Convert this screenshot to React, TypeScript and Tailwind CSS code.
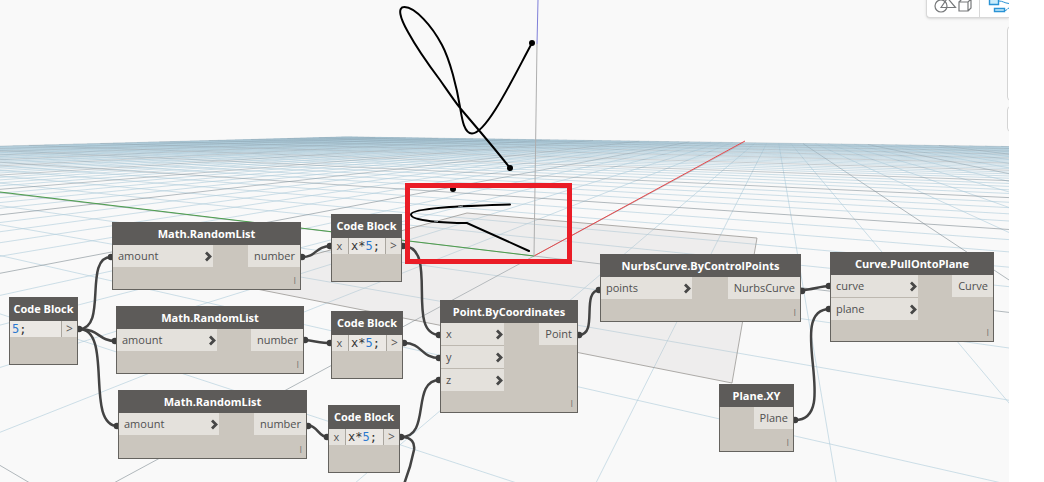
import React from "react";
import clsx from "clsx";

type Point = [number, number];

const EXTENT = 50;
const MAJOR_EVERY = 5;
const NEAR = 0.15;

// Perspective divisor for a ground position (u along the red axis, v along the green axis).
const depth = (u: number, v: number) => 1 + 0.1315 * u + 0.0648 * v;

const project = (u: number, v: number): Point => {
  const w = depth(u, v);
  return [(102 * u - 37.7 * v + 534) / w, (16.5 * u + 8 * v + 256) / w];
};

const segment = (a: Point, b: Point) =>
  `M${a[0].toFixed(1)} ${a[1].toFixed(1)}L${b[0].toFixed(1)} ${b[1].toFixed(1)}`;

function buildGrid() {
  let minor = "";
  let major = "";
  for (let i = -EXTENT; i <= EXTENT; i++) {
    const uStart = Math.max(-EXTENT, (NEAR - 1 - 0.0648 * i) / 0.1315);
    const vStart = Math.max(-EXTENT, (NEAR - 1 - 0.1315 * i) / 0.0648);
    let d = "";
    if (uStart < EXTENT) d += segment(project(uStart, i), project(EXTENT, i));
    if (vStart < EXTENT) d += segment(project(i, vStart), project(i, EXTENT));
    if (i % MAJOR_EVERY === 0) major += d;
    else minor += d;
  }
  return { minor, major };
}

const grid = buildGrid();

function Scene() {
  return (
    <svg className="absolute left-0 top-0 h-full w-full" aria-hidden="true" fill="none">
      <defs>
        <linearGradient id="majorFade" gradientUnits="userSpaceOnUse" x1="0" y1="136" x2="0" y2="200">
          <stop offset="0" stopColor="#7f98a6" stopOpacity="0.3" />
          <stop offset="1" stopColor="#7f8b92" stopOpacity="0.6" />
        </linearGradient>
      </defs>
      <path d={grid.minor} stroke="#aecbdb" strokeOpacity="0.6" />
      <path d={grid.major} stroke="url(#majorFade)" />
      <path
        d="M467 213L757 238L732 383L216 281Z"
        fill="#c8c4c2"
        fillOpacity="0.22"
        stroke="#8f8b88"
        strokeOpacity="0.7"
      />
      <path d="M534 256L0 192" stroke="#4c9f4c" />
      <path d="M534 256L745 141" stroke="#e8484b" />
      <path d="M534 256L537 44" stroke="#aeaeae" />
      <path d="M537 44L538 0" stroke="#7f7fd8" />
      <g stroke="#000" strokeWidth="2" strokeLinecap="round">
        <path d="M532 43C515 74 487 133.500 472 133.500C464 133.500 462 119 460 107C457 88 450 60 442 45C432 26 415 7 404.500 7C397 7 400 18 408 32C414 43 428 64 440 80C447 90 453 99 460 108C478 129 495 149 510 168" />
        <path d="M510 204.500C480 205.500 411 207 411 214.500C411 221 445 223 467 223L529 251" />
      </g>
      <path d="M458 207L463 206M434 221L438 221.500" stroke="#9aa3a8" />
      <circle cx="532" cy="43" r="3" fill="#000" />
      <circle cx="510" cy="168" r="3" fill="#000" />
      <circle cx="453" cy="189" r="3" fill="#000" />
    </svg>
  );
}

const wires = [
  "M79 329C108 329 83 257 111 257",
  "M79 329C100 329 98 341 116 341",
  "M79 329C114 329 84 426 118 426",
  "M302 257C317 257 315 246 331 246",
  "M305 340C315 341 321 343 331 343",
  "M308 425C319 427 318 437 328 437",
  "M403 246C440 246 404 335 440 335",
  "M404 343C423 343 420 358 440 358",
  "M401 437C432 437 410 380 440 380",
  "M401 437C412 437 415 443 414 450C412 460 408 474 404 484",
  "M579 335C599 335 580 290 600 290",
  "M802 290C812 290 820 286 830 286",
  "M795 420C842 420 784 309 830 309",
];

const ends: Point[] = [
  [79, 329], [111, 257], [115, 341], [117, 426],
  [302, 257], [330, 246], [305, 340], [330, 343],
  [308, 426], [327, 437], [403, 246], [404, 343],
  [401, 437], [439, 335], [439, 358], [439, 380],
  [579, 335], [599, 290], [802, 291], [829, 286],
  [829, 309], [795, 420],
];

function Wires() {
  return (
    <svg className="absolute left-0 top-0 h-full w-full" aria-hidden="true" fill="none">
      <g stroke="#434343" strokeWidth="2.500">
        {wires.map((d) => (
          <path key={d} d={d} />
        ))}
      </g>
      <g fill="#3d3d3d">
        {ends.map(([x, y]) => (
          <circle key={`${x}-${y}`} cx={x} cy={y} r="3.300" />
        ))}
      </g>
    </svg>
  );
}

function Chevron() {
  return (
    <svg className="h-3 w-2 shrink-0" viewBox="0 0 8 12" fill="none" aria-hidden="true">
      <path d="M1 1.500L5 5.500L1 9.500" stroke="#474747" strokeWidth="2.800" />
    </svg>
  );
}

const shell = "absolute flex flex-col border border-[#65635f] bg-[#cbc6be]";

function Title({ children, tall }: { children: React.ReactNode; tall?: boolean }) {
  return (
    <h2
      className={clsx(
        "-mx-px -mt-px flex shrink-0 items-center justify-center whitespace-nowrap bg-[#5d5b59] pt-px text-[11px] font-bold text-white",
        tall ? "h-6" : "h-[23px]",
      )}
    >
      {children}
    </h2>
  );
}

interface NodeProps {
  title: string;
  place: string;
  inputs?: string[];
  inputWidth?: string;
  output: string;
}

function GraphNode({ title, place, inputs = [], inputWidth, output }: NodeProps) {
  return (
    <article className={clsx(shell, place)}>
      <Title>{title}</Title>
      <div className="flex flex-1 items-start justify-between">
        <ul className={clsx("flex flex-col gap-px bg-[#bdb8b0]", inputWidth)}>
          {inputs.map((name) => (
            <li
              key={name}
              className="flex h-[22px] items-center justify-between bg-[#e4e1dc] pl-[5px] pt-px text-[11px] text-[#505050]"
            >
              {name}
              <Chevron />
            </li>
          ))}
        </ul>
        <div className="flex h-[22px] items-center bg-[#e4e1dc] pl-1.5 pr-[5px] pt-px text-[11px] text-[#505050]">
          {output}
        </div>
      </div>
      <span className="self-end px-1 pb-0.5 text-[9px] leading-3 text-[#77736e]">I</span>
    </article>
  );
}

function CodeBlock({
  place,
  input,
  before,
  value,
}: {
  place: string;
  input?: string;
  before?: string;
  value: string;
}) {
  return (
    <article className={clsx(shell, place)}>
      <Title tall>Code Block</Title>
      <div className="flex h-4 items-center bg-[#e4e1dc] text-[11px] leading-4 text-[#555]">
        {input && <span className="w-[17px] border-r border-[#aaa69f] pr-px text-center">{input}</span>}
        <code className="flex-1 bg-[#ebe8e4] pl-[2px] font-['DejaVu_Sans_Mono',monospace] text-[12px] text-[#333]">
          {before}
          <span className="text-[#2b78cf]">{value}</span>;
        </code>
        <span className="w-4 border-l border-[#aaa69f] text-center text-[12px]">&gt;</span>
      </div>
    </article>
  );
}

function ViewToolbar() {
  return (
    <div className="absolute -top-2 right-0 flex h-[26px] w-[83px] rounded-bl border border-r-0 border-[#d8d8d8] bg-white shadow-sm">
      <button type="button" aria-label="Geometry view" className="flex w-[53px] justify-center border-r border-[#d8d8d8] pt-[7px]">
        <svg width="38" height="14" viewBox="0 0 38 14" fill="none" stroke="#77797b" strokeWidth="1.200">
          <circle cx="7" cy="6" r="6" />
          <path d="M7 7.500L13.500 -2L21.500 7.500Z" />
          <path d="M25 2H34V11H25ZM25 2L28 -1H37V8L34 11M34 2L37 -1" />
        </svg>
      </button>
      <button type="button" aria-label="Graph view" className="flex flex-1 justify-end pt-[7px]">
        <svg width="21" height="14" viewBox="0 0 21 14" fill="#c9ecfb" stroke="#2a93d5" strokeWidth="1.400">
          <path d="M1.500 -2H10.500V4.500H1.500Z" />
          <path d="M6.500 8.500H16.500V11.500H6.500Z" />
          <path d="M11 1C15 1 16 3 21 3.500M17 10.500C19 10.500 19 8.500 21 8" fill="none" strokeWidth="1" />
        </svg>
      </button>
    </div>
  );
}

export default function App() {
  return (
    <div className="flex h-screen bg-white font-['Open_Sans','Noto_Sans',sans-serif]">
      <main className="relative flex-1 overflow-hidden bg-[#f9f9f9]">
        <Scene />
        <Wires />

        <CodeBlock place="left-[9px] top-[297px] h-[68px] w-[69px]" value="5" />
        <GraphNode title="Math.RandomList" place="left-[112px] top-[222px] h-[68px] w-[189px]" inputs={["amount"]} inputWidth="w-[100px]" output="number" />
        <GraphNode title="Math.RandomList" place="left-[116px] top-[306px] h-[68px] w-[188px]" inputs={["amount"]} inputWidth="w-[100px]" output="number" />
        <GraphNode title="Math.RandomList" place="left-[118px] top-[390px] h-[69px] w-[189px]" inputs={["amount"]} inputWidth="w-[100px]" output="number" />
        <CodeBlock place="left-[331px] top-[214px] h-[68px] w-[71px]" input="x" before="x*" value="5" />
        <CodeBlock place="left-[331px] top-[311px] h-[68px] w-[72px]" input="x" before="x*" value="5" />
        <CodeBlock place="left-[328px] top-[405px] h-[68px] w-[72px]" input="x" before="x*" value="5" />
        <GraphNode title="Point.ByCoordinates" place="left-[440px] top-[300px] h-[113px] w-[138px]" inputs={["x", "y", "z"]} inputWidth="w-[63px]" output="Point" />
        <GraphNode title="NurbsCurve.ByControlPoints" place="left-[600px] top-[254px] h-[68px] w-[201px]" inputs={["points"]} inputWidth="w-[91px]" output="NurbsCurve" />
        <GraphNode title="Curve.PullOntoPlane" place="left-[830px] top-[252px] h-[90px] w-[164px]" inputs={["curve", "plane"]} inputWidth="w-[87px]" output="Curve" />
        <GraphNode title="Plane.XY" place="left-[719px] top-[384px] h-[68px] w-[75px]" output="Plane" />

        <div className="absolute left-[405px] top-[183px] h-[81px] w-[167px] border-5 border-[#ea1c26]" />
        <ViewToolbar />
        <div className="absolute -right-1 top-[26px] h-[75px] w-[6px] rounded-l border border-[#d4d4d4] bg-white" />
        <div className="absolute -right-1 top-[106px] h-[26px] w-[6px] rounded-l border border-[#d4d4d4] bg-white" />
      </main>
      <div className="w-[35px] shrink-0 bg-white" />
    </div>
  );
}
